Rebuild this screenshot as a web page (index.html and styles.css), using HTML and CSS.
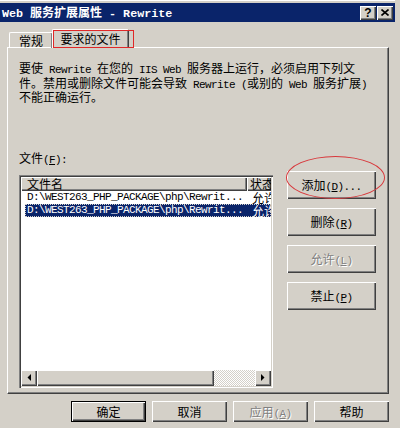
FILE: index.html
```html
<!DOCTYPE html>
<html lang="zh-CN">
<head>
  <meta charset="UTF-8">
  <meta name="viewport" content="width=device-width, initial-scale=1.0">
  <title>Web 服务扩展属性 - Rewrite</title>
  <link rel="stylesheet" href="styles.css">
</head>
<body>
  <div class="window">
    <div class="titlebar">
      <span class="title"><span class="en">Web </span>服务扩展属性<span class="en"> - Rewrite</span></span>
      <div class="caption-btns">
        <span class="cap-btn">?</span>
        <span class="cap-btn">
          <svg width="8" height="7" viewBox="0 0 8 7"><path d="M0.5 0.5 L7.5 6.5 M7.5 0.5 L0.5 6.5" stroke="#000" stroke-width="1.6"/></svg>
        </span>
      </div>
    </div>

    <div class="tabs">
      <div class="tab">常规</div>
      <div class="tab active">要求的文件</div>
    </div>

    <div class="panel">
      <p class="desc">要使<span class="en"> Rewrite </span>在您的<span class="en"> IIS Web </span>服务器上运行，必须启用下列文<br>件。禁用或删除文件可能会导致<span class="en"> Rewrite (</span>或别的<span class="en"> Web </span>服务扩展<span class="en">)</span><br>不能正确运行。</p>
      <div class="label">文件<span class="en">(<u>F</u>):</span></div>

      <div class="files">
        <div class="listview">
          <div class="lv-header">
            <span class="hd-name">文件名</span>
            <span class="hd-state">状态</span>
          </div>
          <div class="lv-row">
            <span class="col-name en">D:\WEST263_PHP_PACKAGE\php\Rewrit...</span>
            <span class="col-state">允许</span>
          </div>
          <div class="lv-row selected">
            <span class="col-name en">D:\WEST263_PHP_PACKAGE\php\Rewrit...</span>
            <span class="col-state">允许</span>
          </div>
          <div class="lv-spacer"></div>
          <div class="hscroll">
            <span class="sb-btn">
              <svg width="4" height="7" viewBox="0 0 4 7"><polygon points="4,0 4,7 0.5,3.5" fill="#000"/></svg>
            </span>
            <span class="sb-thumb"></span>
            <span class="sb-track"></span>
            <span class="sb-btn">
              <svg width="4" height="7" viewBox="0 0 4 7"><polygon points="0,0 0,7 3.5,3.5" fill="#000"/></svg>
            </span>
          </div>
        </div>

        <div class="side-btns">
          <button class="btn add">添加<span class="en">(<u>D</u>)...</span></button>
          <button class="btn">删除<span class="en">(<u>R</u>)</span></button>
          <button class="btn disabled">允许<span class="en">(<u>L</u>)</span></button>
          <button class="btn">禁止<span class="en">(<u>P</u>)</span></button>
        </div>
      </div>
    </div>

    <div class="footer">
      <button class="btn default">确定</button>
      <button class="btn">取消</button>
      <button class="btn disabled">应用<span class="en">(<u>A</u>)</span></button>
      <button class="btn">帮助</button>
    </div>
  </div>
</body>
</html>
```

FILE: styles.css
```css
body {
  margin: 0;
  background-color: #d4d0c8;
  font-family: "Noto Sans CJK SC", sans-serif;
  font-size: 12px;
  color: #000;
}
.en {
  font-family: "Liberation Mono", monospace;
  font-size: 11px;
  letter-spacing: -0.6px;
}
.window {
  width: 395px;
  height: 428px;
  padding-top: 3px;
  box-sizing: border-box;
  box-shadow: inset 0 1px #fff;
}

/* title bar */
.titlebar {
  height: 19px;
  background-color: #0a246a;
  display: flex;
  align-items: center;
  justify-content: space-between;
}
.title {
  color: #fff;
  font-weight: bold;
  padding-left: 2px;
  white-space: pre;
  line-height: 19px;
}
.title .en {
  font-size: 11.7px;
  letter-spacing: 0;
}
.caption-btns {
  display: flex;
  gap: 1px;
  padding-right: 2px;
}
.cap-btn {
  width: 16px;
  height: 14px;
  box-sizing: border-box;
  background-color: #d4d0c8;
  box-shadow: inset 1px 1px #fff, inset -1px -1px #404040, inset -2px -2px #808080;
  display: flex;
  align-items: center;
  justify-content: center;
  font-family: "Liberation Sans", sans-serif;
  font-weight: bold;
  font-size: 12px;
  line-height: 1;
}

/* tabs */
.tabs {
  display: flex;
  align-items: flex-end;
  margin-top: 8px;
  padding-left: 7px;
  height: 18px;
  margin-bottom: -1px;
}
.tab {
  height: 16px;
  width: 44px;
  margin-left: 2px;
  box-sizing: border-box;
  border-top: 1px solid #fff;
  border-left: 1px solid #fff;
  border-right: 1px solid #404040;
  box-shadow: inset -1px 0 #808080;
  border-radius: 2px 2px 0 0;
  text-align: center;
  line-height: 15px;
}
.tab.active {
  position: relative;
  z-index: 1;
  width: 77px;
  height: 19px;
  margin-left: -1px;
  background-color: #d4d0c8;
  line-height: 17px;
}
.tab.active::after {
  content: "";
  position: absolute;
  left: 0;
  top: 0;
  width: 81px;
  height: 18px;
  box-sizing: border-box;
  border: 1px solid #e02828;
}

/* panel */
.panel {
  width: 382px;
  height: 347px;
  margin-left: 7px;
  box-sizing: border-box;
  border-top: 1px solid #fff;
  border-left: 1px solid #fff;
  border-right: 1px solid #404040;
  border-bottom: 1px solid #404040;
  box-shadow: inset -1px -1px #808080;
  padding: 14px 0 0 11px;
}
.desc {
  margin: 0;
  line-height: 12.5px;
  white-space: nowrap;
}
.label {
  margin-top: 48px;
  line-height: 12px;
}
.files {
  display: flex;
  align-items: flex-start;
  margin-top: 5px;
}

/* list view */
.listview {
  width: 254px;
  height: 213px;
  margin-top: 4px;
  box-sizing: border-box;
  padding: 2px;
  background-color: #fff;
  box-shadow: inset 1px 1px #808080, inset 2px 2px #404040, inset -1px -1px #fff, inset -2px -2px #d4d0c8;
  display: flex;
  flex-direction: column;
}
.lv-header {
  display: flex;
  height: 14px;
  line-height: 14px;
}
.lv-header span {
  box-sizing: border-box;
  background-color: #d4d0c8;
  box-shadow: inset 1px 1px #fff, inset -1px -1px #404040, inset -2px -2px #808080;
  white-space: nowrap;
  overflow-x: clip;
  overflow-y: visible;
}
.hd-name {
  width: 226px;
  padding-left: 6px;
}
.hd-state {
  width: 24px;
  padding-left: 3px;
}
.lv-row {
  display: flex;
  height: 13px;
  line-height: 13px;
  margin-left: 4px;
  white-space: nowrap;
}
.col-name {
  width: 222px;
  padding-left: 2px;
  box-sizing: border-box;
}
.col-state {
  width: 24px;
  padding-left: 5px;
  box-sizing: border-box;
  overflow-x: clip;
  overflow-y: visible;
}
.lv-row.selected {
  background-color: #0a246a;
  color: #fff;
  outline: 1px dotted #d4d0c8;
  outline-offset: -1px;
}
.lv-spacer {
  flex: 1;
}
.hscroll {
  display: flex;
  height: 16px;
}
.sb-btn,
.sb-thumb {
  background-color: #d4d0c8;
  box-shadow: inset 1px 1px #fff, inset -1px -1px #404040, inset -2px -2px #808080;
}
.sb-btn {
  width: 16px;
  display: flex;
  align-items: center;
  justify-content: center;
}
.sb-thumb {
  width: 177px;
}
.sb-track {
  flex: 1;
  background: repeating-conic-gradient(#fff 0 25%, #d4d0c8 0 50%) 0 0 / 2px 2px;
}

/* buttons */
.btn {
  font-family: "Noto Sans CJK SC", sans-serif;
  font-size: 12px;
  color: #000;
  background-color: #d4d0c8;
  border: none;
  padding: 0;
  box-shadow: inset 1px 1px #fff, inset -1px -1px #404040, inset -2px -2px #808080;
  cursor: pointer;
}
.btn.disabled {
  color: #808080;
  text-shadow: 1px 1px #fff;
}
.side-btns {
  display: flex;
  flex-direction: column;
  gap: 9px;
  margin-left: 14px;
}
.side-btns .btn {
  width: 89px;
  height: 28px;
}
.btn.add {
  position: relative;
}
.btn.add::after {
  content: "";
  position: absolute;
  left: -1px;
  top: -15px;
  width: 99px;
  height: 43px;
  box-sizing: border-box;
  border: 1px solid #d8383c;
  border-radius: 50%;
}
.footer {
  display: flex;
  justify-content: flex-end;
  gap: 6px;
  margin-top: 7px;
  padding-right: 6px;
}
.footer .btn {
  width: 75px;
  height: 21px;
}
.btn.default {
  border: 1px solid #000;
}
```
